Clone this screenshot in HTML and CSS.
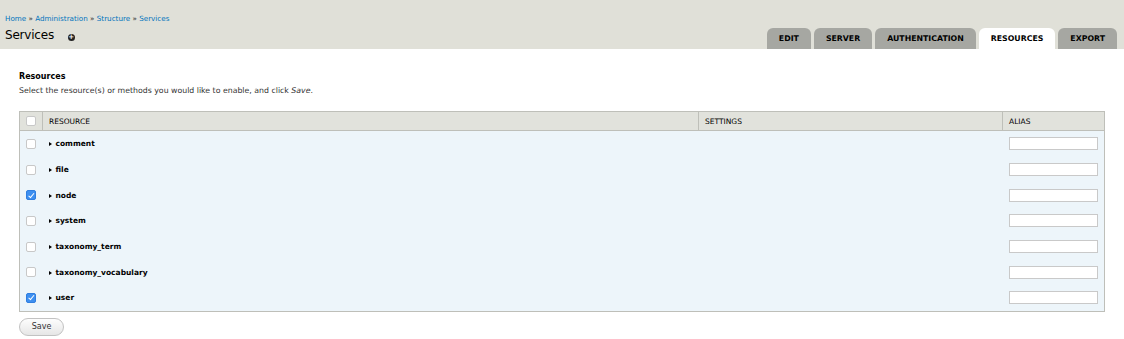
FILE: index.html
```html
<!DOCTYPE html>
<html lang="en">
<head>
  <meta charset="UTF-8">
  <title>Services</title>
  <link rel="stylesheet" href="styles.css">
</head>
<body>
  <div class="header">
    <div class="header-left">
      <div class="breadcrumb"><a href="#">Home</a> » <a href="#">Administration</a> » <a href="#">Structure</a> » <a href="#">Services</a></div>
      <h1>Services <span class="add-icon">+</span></h1>
    </div>
    <ul class="tabs">
      <li><a href="#">Edit</a></li>
      <li><a href="#">Server</a></li>
      <li><a href="#">Authentication</a></li>
      <li class="active"><a href="#">Resources</a></li>
      <li><a href="#">Export</a></li>
    </ul>
  </div>

  <div class="content">
    <h2>Resources</h2>
    <p class="description">Select the resource(s) or methods you would like to enable, and click <em>Save</em>.</p>

    <table class="resources">
      <thead>
        <tr>
          <th class="col-check"><span class="checkbox"></span></th>
          <th class="col-name">Resource</th>
          <th class="col-settings">Settings</th>
          <th class="col-alias">Alias</th>
        </tr>
      </thead>
      <tbody>
        <tr><td class="col-check"><span class="checkbox"></span></td><td class="name"><span class="arrow"></span>comment</td><td></td><td class="col-alias"><input type="text"></td></tr>
        <tr><td class="col-check"><span class="checkbox"></span></td><td class="name"><span class="arrow"></span>file</td><td></td><td class="col-alias"><input type="text"></td></tr>
        <tr><td class="col-check"><span class="checkbox checked"></span></td><td class="name"><span class="arrow"></span>node</td><td></td><td class="col-alias"><input type="text"></td></tr>
        <tr><td class="col-check"><span class="checkbox"></span></td><td class="name"><span class="arrow"></span>system</td><td></td><td class="col-alias"><input type="text"></td></tr>
        <tr><td class="col-check"><span class="checkbox"></span></td><td class="name"><span class="arrow"></span>taxonomy_term</td><td></td><td class="col-alias"><input type="text"></td></tr>
        <tr><td class="col-check"><span class="checkbox"></span></td><td class="name"><span class="arrow"></span>taxonomy_vocabulary</td><td></td><td class="col-alias"><input type="text"></td></tr>
        <tr><td class="col-check"><span class="checkbox checked"></span></td><td class="name"><span class="arrow"></span>user</td><td></td><td class="col-alias"><input type="text"></td></tr>
      </tbody>
    </table>

    <button class="save-button">Save</button>
  </div>
</body>
</html>
```

FILE: styles.css
```css
body {
  margin: 0;
  padding: 0;
  font-family: "DejaVu Sans", Verdana, sans-serif;
  color: #000;
  background: #fff;
}
a {
  color: #0074bd;
  text-decoration: none;
}
.header {
  background-color: #e0e0d8;
  height: 49px;
  display: flex;
  justify-content: space-between;
  align-items: flex-end;
  padding: 0 7px 0 5px;
}
.header-left {
  align-self: stretch;
}
.breadcrumb {
  font-size: 7.2px;
  padding-top: 14px;
  color: #333;
}
h1 {
  font-size: 12px;
  font-weight: normal;
  margin: 5px 0 0;
  letter-spacing: -0.2px;
}
.add-icon {
  display: inline-block;
  width: 7px;
  height: 7px;
  border-radius: 50%;
  background: #222;
  color: #fff;
  font-size: 7px;
  line-height: 7px;
  text-align: center;
  font-weight: bold;
  margin-left: 10px;
  vertical-align: 0;
}
.tabs {
  list-style: none;
  display: flex;
  gap: 3px;
  margin: 0;
  padding: 0;
}
.tabs li a {
  display: block;
  height: 21px;
  line-height: 22px;
  padding: 0 12px;
  background: #a6a7a2;
  color: #000;
  border-radius: 6px 6px 0 0;
  font-size: 7.8px;
  font-weight: bold;
  text-transform: uppercase;
  text-align: center;
}
.tabs li.active a {
  background: #fff;
}
.content {
  padding: 0 19px;
}
h2 {
  font-size: 8px;
  font-weight: bold;
  margin: 23px 0 0;
}
.description {
  font-size: 7.8px;
  color: #333;
  margin: 5px 0 16px;
}
.resources {
  width: 100%;
  border-collapse: collapse;
  border: 1px solid #bebfb9;
  font-size: 7.5px;
}
.resources th {
  background: #e1e2dc;
  font-weight: normal;
  text-transform: uppercase;
  text-align: left;
  height: 18px;
  padding: 0 6px;
  border-left: 1px solid #bebfb9;
  border-bottom: 1px solid #bebfb9;
}
.resources td {
  background: #edf5fa;
  height: 25.7px;
  padding: 0 6px;
}
.resources .col-check {
  width: 9px;
  padding: 0 6px;
}
.resources th.col-check {
  border-left: none;
}
.resources .col-settings {
  width: 291px;
}
.resources .col-alias {
  width: 89px;
}
.name {
  font-weight: bold;
}
.arrow {
  display: inline-block;
  width: 0;
  height: 0;
  border-top: 2.5px solid transparent;
  border-bottom: 2.5px solid transparent;
  border-left: 3px solid #000;
  margin-right: 4px;
  vertical-align: 0;
}
.checkbox {
  display: block;
  width: 8px;
  height: 8px;
  border: 1px solid #c8c8c8;
  border-radius: 2px;
  background: #fff;
}
.checkbox.checked {
  background: #3d8ff0;
  border-color: #2f7ee0;
  position: relative;
}
.checkbox.checked::after {
  content: "";
  position: absolute;
  left: 2.5px;
  top: 0.5px;
  width: 2px;
  height: 4.5px;
  border: solid #fff;
  border-width: 0 1px 1px 0;
  transform: rotate(40deg);
}
.resources input {
  display: block;
  box-sizing: border-box;
  width: 89px;
  height: 13px;
  border: 1px solid #c9c9c9;
  background: #fff;
  margin: 0;
  padding: 0;
}
.save-button {
  margin-top: 6px;
  font-family: "DejaVu Sans", Verdana, sans-serif;
  font-size: 8px;
  color: #333;
  width: 45px;
  height: 18px;
  border: 1px solid #c2c2c2;
  border-radius: 9px;
  background: linear-gradient(#fdfdfd, #e6e6e6);
  padding: 0;
}
```
